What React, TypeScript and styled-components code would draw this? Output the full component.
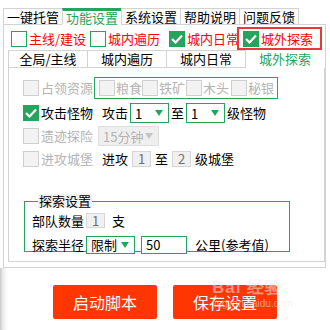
import styled, { createGlobalStyle } from "styled-components";

const GREEN = "#25a55c";
const LINE = "#d3d3d3";
const RED = "#ff0000";
const MUTED = "#b4b4b4";

const GlobalStyle = createGlobalStyle`
  html, body {
    margin: 0;
    padding: 0;
    background: #fff;
  }
  body {
    font-family: "Noto Sans CJK SC", "Noto Sans", sans-serif;
    font-size: 13px;
    color: #000;
  }
  * {
    box-sizing: border-box;
  }
`;

const Window = styled.div`
  width: 330px;
  height: 330px;
  overflow: hidden;
  position: relative;
  background: #fff;
`;

const TabBar = styled.div`
  display: flex;
  padding: 8px 0 0 3px;
  height: 25px;
`;

const Tab = styled.div<{ active?: boolean }>`
  width: 60px;
  height: 17px;
  margin-right: -1px;
  border: 1px solid ${LINE};
  border-top: ${({ active }) => (active ? `3px solid ${GREEN}` : `1px solid ${LINE}`)};
  border-bottom: ${({ active }) => (active ? "1px solid #fff" : `1px solid ${LINE}`)};
  color: ${({ active }) => (active ? GREEN : "#000")};
  font-size: 13px;
  line-height: ${({ active }) => (active ? "13px" : "15px")};
  text-align: center;
  white-space: nowrap;
`;

const TabFill = styled.div`
  flex: 1;
  height: 17px;
  margin-right: 4px;
  border-bottom: 1px solid ${LINE};
`;

const OuterPanel = styled.div`
  margin-left: 3px;
  width: 323px;
  height: 243px;
  border: 1px solid ${LINE};
  border-top: none;
  padding: 0 0 0 2px;
`;

const CheckRow = styled.div`
  display: flex;
  height: 25px;
  padding-top: 2px;
`;

const CheckCell = styled.div<{ w: number; pad: number; highlight?: boolean }>`
  display: flex;
  align-items: center;
  gap: 2px;
  width: ${({ w }) => w}px;
  height: 23px;
  padding-left: ${({ pad }) => pad}px;
  border: ${({ highlight }) => (highlight ? "2px solid #e8383a" : "none")};
  white-space: nowrap;
`;

const Box = styled.span<{ checked?: boolean; disabled?: boolean }>`
  display: inline-flex;
  align-items: center;
  justify-content: center;
  flex: none;
  width: 16px;
  height: 16px;
  border: 1px solid ${({ disabled }) => (disabled ? "#cfcfcf" : GREEN)};
  background: ${({ checked, disabled }) => (disabled ? "#f3f3f3" : checked ? GREEN : "#fff")};
`;

const Label = styled.span<{ tone?: "red" | "muted" | "black" | "green" }>`
  font-size: 13px;
  line-height: 16px;
  white-space: nowrap;
  color: ${({ tone }) =>
    tone === "red" ? RED : tone === "muted" ? MUTED : tone === "green" ? GREEN : "#000"};
`;

const SubTabs = styled.div`
  display: flex;
  height: 18px;
  margin-left: 2px;
`;

const SubTab = styled.div<{ active?: boolean }>`
  width: 80px;
  height: 18px;
  margin-right: -1px;
  border: ${({ active }) => (active ? "1px solid transparent" : `1px solid ${LINE}`)};
  color: ${({ active }) => (active ? GREEN : "#000")};
  font-size: 13px;
  line-height: 16px;
  text-align: center;
`;

const InnerPanel = styled.div`
  margin-left: 2px;
  width: 317px;
  height: 194px;
  border: 1px solid ${LINE};
  border-top: none;
  padding: 9px 0 0 14px;
`;

const OptRow = styled.div<{ h: number; mt: number }>`
  display: flex;
  align-items: center;
  height: ${({ h }) => h}px;
  margin-top: ${({ mt }) => mt}px;
`;

const Lead = styled.div`
  display: flex;
  align-items: center;
  gap: 2px;
  width: 71px;
  flex: none;
`;

const Inline = styled.div<{ ml: number; gap?: number }>`
  display: flex;
  align-items: center;
  gap: ${({ gap }) => gap ?? 0}px;
  margin-left: ${({ ml }) => ml}px;
`;

const ResGroup = styled.div`
  display: flex;
  align-items: center;
  height: 22px;
  width: 184px;
  padding-left: 4px;
  border: 1px solid ${GREEN};
`;

const ResItem = styled.div<{ w: number }>`
  display: flex;
  align-items: center;
  gap: 1px;
  width: ${({ w }) => w}px;
`;

const Select = styled.div<{ w: number; h: number; disabled?: boolean }>`
  display: flex;
  align-items: center;
  justify-content: space-between;
  width: ${({ w }) => w}px;
  height: ${({ h }) => h}px;
  padding: 0 5px 0 4px;
  margin: 0 2px;
  border: 1px solid ${({ disabled }) => (disabled ? "#dedede" : GREEN)};
  background: ${({ disabled }) => (disabled ? "#efefef" : "#fff")};
  color: ${({ disabled }) => (disabled ? MUTED : "#000")};
  font-size: 13px;
`;

const Arrow = styled.span<{ disabled?: boolean }>`
  width: 0;
  height: 0;
  border-left: 4px solid transparent;
  border-right: 4px solid transparent;
  border-top: 6px solid ${({ disabled }) => (disabled ? "#c4c4c4" : GREEN)};
`;

const NumBox = styled.span<{ w: number; h: number; green?: boolean }>`
  display: inline-flex;
  align-items: center;
  justify-content: ${({ green }) => (green ? "flex-start" : "center")};
  width: ${({ w }) => w}px;
  height: ${({ h }) => h}px;
  padding-left: ${({ green }) => (green ? 4 : 0)}px;
  border: 1px solid ${({ green }) => (green ? GREEN : "#d6d6d6")};
  background: ${({ green }) => (green ? "#fff" : "#f0f0f0")};
  color: ${({ green }) => (green ? "#000" : "#6e6e6e")};
  font-size: 13px;
`;

const Fieldset = styled.fieldset`
  margin: 27px 0 0 1px;
  padding: 0 0 1px 7px;
  width: 266px;
  height: 58px;
  border: 1px solid ${GREEN};
`;

const Legend = styled.legend`
  margin-left: 6px;
  padding: 0 1px;
  height: 14px;
  line-height: 14px;
  background: #f1f1f1;
  font-size: 13px;
`;

const FieldRow = styled.div<{ mt: number }>`
  display: flex;
  align-items: center;
  margin-top: ${({ mt }) => mt}px;
`;

const FieldLabel = styled.span`
  width: 54px;
  font-size: 13px;
`;

const Footer = styled.div`
  display: flex;
  justify-content: center;
  gap: 16px;
  height: 63px;
  padding: 17px 0 0 0;
  background: linear-gradient(to right, #c9c9c9 0, #ececec 3px, #fff 8px);
`;

const ActionButton = styled.button`
  width: 104px;
  height: 34px;
  border: none;
  border-radius: 2px;
  background: #ff3502;
  color: #fff;
  font-family: "Noto Sans CJK SC", sans-serif;
  font-size: 16px;
  padding: 0;
`;

const Watermark = styled.div`
  position: absolute;
  left: 212px;
  top: 278px;
  display: flex;
  flex-direction: column;
  align-items: flex-start;
  color: rgba(235, 235, 235, 0.55);
  font-family: "Liberation Sans", sans-serif;
  pointer-events: none;
`;

const WmTop = styled.span`
  font-size: 17px;
  font-weight: bold;
  line-height: 20px;
  letter-spacing: 1px;
`;

const WmBottom = styled.span`
  font-size: 10px;
  line-height: 12px;
`;

const Check = () => (
  <svg width="12" height="10" viewBox="0 0 12 10">
    <path d="M1 5 L4.5 8.5 L11 1.5" fill="none" stroke="#fff" strokeWidth="2.2" />
  </svg>
);

const Cb = ({ checked, disabled }: { checked?: boolean; disabled?: boolean }) => (
  <Box checked={checked} disabled={disabled}>
    {checked && <Check />}
  </Box>
);

const mainTabs = ["一键托管", "功能设置", "系统设置", "帮助说明", "问题反馈"];
const modes = [
  { label: "主线/建设", checked: false, w: 79, pad: 5 },
  { label: "城内遍历", checked: false, w: 79, pad: 5 },
  { label: "城内日常", checked: true, w: 73, pad: 5 },
  { label: "城外探索", checked: true, w: 85, pad: 4, highlight: true },
];
const subTabs = ["全局/主线", "城内遍历", "城内日常", "城外探索"];
const resources = [
  { name: "粮食", w: 43 },
  { name: "铁矿", w: 44 },
  { name: "木头", w: 45 },
  { name: "秘银", w: 44 },
];

export default function App() {
  return (
    <Window>
      <GlobalStyle />
      <TabBar>
        {mainTabs.map((t, i) => (
          <Tab key={t} active={i === 1}>
            {t}
          </Tab>
        ))}
        <TabFill />
      </TabBar>
      <OuterPanel>
        <CheckRow>
          {modes.map((m) => (
            <CheckCell key={m.label} w={m.w} pad={m.pad} highlight={m.highlight}>
              <Cb checked={m.checked} />
              <Label tone="red">{m.label}</Label>
            </CheckCell>
          ))}
        </CheckRow>
        <SubTabs>
          {subTabs.map((t, i) => (
            <SubTab key={t} active={i === 3}>
              {t}
            </SubTab>
          ))}
        </SubTabs>
        <InnerPanel>
          <OptRow h={22} mt={0}>
            <Lead>
              <Cb disabled />
              <Label tone="muted">占领资源</Label>
            </Lead>
            <ResGroup>
              {resources.map((r) => (
                <ResItem key={r.name} w={r.w}>
                  <Cb disabled />
                  <Label tone="muted">{r.name}</Label>
                </ResItem>
              ))}
            </ResGroup>
          </OptRow>
          <OptRow h={20} mt={4}>
            <Lead>
              <Cb checked />
              <Label>攻击怪物</Label>
            </Lead>
            <Inline ml={8}>
              <Label>攻击</Label>
              <Select w={39} h={20}>
                1<Arrow />
              </Select>
              <Label>至</Label>
              <Select w={39} h={20}>
                1<Arrow />
              </Select>
              <Label>级怪物</Label>
            </Inline>
          </OptRow>
          <OptRow h={20} mt={3}>
            <Lead>
              <Cb disabled />
              <Label tone="muted">遗迹探险</Label>
            </Lead>
            <Inline ml={2}>
              <Select w={61} h={20} disabled>
                15分钟<Arrow disabled />
              </Select>
            </Inline>
          </OptRow>
          <OptRow h={17} mt={4}>
            <Lead>
              <Cb disabled />
              <Label tone="muted">进攻城堡</Label>
            </Lead>
            <Inline ml={8} gap={4}>
              <Label>进攻</Label>
              <NumBox w={19} h={16}>1</NumBox>
              <Label>至</Label>
              <NumBox w={19} h={16}>2</NumBox>
              <Label>级城堡</Label>
            </Inline>
          </OptRow>
          <Fieldset>
            <Legend>探索设置</Legend>
            <FieldRow mt={3}>
              <FieldLabel>部队数量</FieldLabel>
              <NumBox w={19} h={15}>1</NumBox>
              <Label style={{ marginLeft: 7 }}>支</Label>
            </FieldRow>
            <FieldRow mt={5}>
              <FieldLabel>探索半径</FieldLabel>
              <Select w={49} h={18} style={{ margin: 0 }}>
                限制<Arrow />
              </Select>
              <NumBox w={46} h={18} green style={{ marginLeft: 6 }}>
                50
              </NumBox>
              <Label style={{ marginLeft: 8 }}>公里(参考值)</Label>
            </FieldRow>
          </Fieldset>
        </InnerPanel>
      </OuterPanel>
      <Footer>
        <ActionButton>启动脚本</ActionButton>
        <ActionButton>保存设置</ActionButton>
      </Footer>
      <Watermark>
        <WmTop>Bai 经验</WmTop>
        <WmBottom>jingyan.baidu.com</WmBottom>
      </Watermark>
    </Window>
  );
}
